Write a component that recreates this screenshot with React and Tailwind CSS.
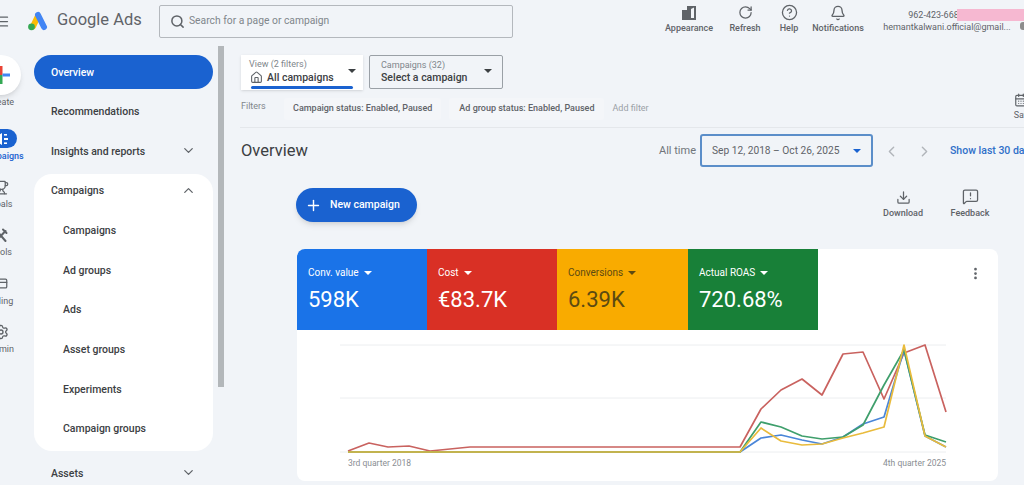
import React from 'react';
import {
  Menu, Search, RotateCw, CircleHelp, Bell, Download, MessageSquareWarning,
  ChevronDown, ChevronUp, ChevronLeft, ChevronRight, Plus, MoreVertical,
  Trophy, CreditCard, Settings, Home, CalendarDays
} from 'lucide-react';

const Caret = ({ className = 'border-t-[#3c4043]' }) => (
  <span className={`block w-0 h-0 border-x-[4px] border-x-transparent border-t-[4px] ${className}`} />
);

// Google Ads mark
const AdsLogo = () => (
  <svg width="21" height="20" viewBox="0 0 21 20" fill="none">
    <path d="M6 15.5 11 5" stroke="#fbbc04" strokeWidth="6" strokeLinecap="round" />
    <path d="M11 4 17 16" stroke="#4285f4" strokeWidth="6" strokeLinecap="round" />
    <circle cx="4.5" cy="15.8" r="3.4" fill="#34a853" />
  </svg>
);

const AppearanceIcon = () => (
  <svg width="16" height="16" viewBox="0 0 16 16" fill="#5f6368">
    <path d="M1 5h5v10H1z" />
    <path fillRule="evenodd" d="M6 1h9v14H6zM10 4v9h3V2.5z" />
  </svg>
);

const ColorPlus = () => (
  <svg width="18" height="18" viewBox="0 0 18 18">
    <rect x="7.5" y="0" width="3" height="9" fill="#ea4335" />
    <rect x="7.5" y="9" width="3" height="9" fill="#34a853" />
    <rect x="0" y="7.5" width="7.5" height="3" fill="#fbbc04" />
    <rect x="10.5" y="7.5" width="7.5" height="3" fill="#4285f4" />
  </svg>
);

const CampaignIcon = () => (
  <svg width="16" height="14" viewBox="0 0 16 14" fill="#fff">
    <path d="M1 4h3l5-3v12L4 10H1z" />
    <rect x="11" y="6" width="4" height="2" />
    <rect x="11" y="2" width="3" height="1.6" />
    <rect x="11" y="10.4" width="3" height="1.6" />
  </svg>
);

const ToolsIcon = () => (
  <svg width="15" height="15" viewBox="0 0 15 15" fill="none" stroke="#5f6368" strokeWidth="2" strokeLinecap="round">
    <path d="M3 2 12.5 13" />
    <path d="M12.5 3 3 13" />
    <path d="M10 1.5 13.5 5" />
  </svg>
);

const topActions = [
  { label: 'Appearance', icon: <AppearanceIcon />, w: 'w-[56px]' },
  { label: 'Refresh', icon: <RotateCw size={15} strokeWidth={2} />, w: 'w-[56px]' },
  { label: 'Help', icon: <CircleHelp size={17} strokeWidth={1.8} />, w: 'w-[32px]' },
  { label: 'Notifications', icon: <Bell size={16} strokeWidth={2} />, w: 'w-[66px]' },
];

const railItems = [
  { label: 'Goals', icon: <Trophy size={15} /> },
  { label: 'Tools', icon: <ToolsIcon /> },
  { label: 'Billing', icon: <CreditCard size={15} /> },
  { label: 'Admin', icon: <Settings size={16} /> },
];

const subItems = ['Campaigns', 'Ad groups', 'Ads', 'Asset groups', 'Experiments', 'Campaign groups'];

const tiles = [
  { label: 'Conv. value', value: '598K', bg: 'bg-[#1a73e8]', text: 'text-white', caret: 'border-t-white', w: 'w-[130px]', round: 'rounded-tl-lg' },
  { label: 'Cost', value: '€83.7K', bg: 'bg-[#d93025]', text: 'text-white', caret: 'border-t-white', w: 'w-[130px]', round: '' },
  { label: 'Conversions', value: '6.39K', bg: 'bg-[#f9ab00]', text: 'text-[#5c4a12]', caret: 'border-t-[#5c4a12]', w: 'w-[131px]', round: '' },
  { label: 'Actual ROAS', value: '720.68%', bg: 'bg-[#188038]', text: 'text-white', caret: 'border-t-white', w: 'w-[130px]', round: '' },
];

const flat = '348,452 740,452';
const series = [
  { color: '#c9625f', points: '348,451 369,443 388,447 409,446 430,451 470,447 740,447 761,409 781,390 802,379 822,395 843,354 863,352 884,399 904,353 925,345 946,412' },
  { color: '#4a86d8', points: `${flat} 761,438 781,435 802,440 822,444 843,437 863,424 884,417 904,350 925,436 946,447` },
  { color: '#3f9f6c', points: `${flat} 761,422 781,427 802,436 822,439 843,437 863,425 884,385 904,350 925,435 946,442` },
  { color: '#e9bb3c', points: `${flat} 761,428 781,441 802,445 822,444 843,438 863,433 884,427 904,345 925,436 946,447` },
];

const TopBar = () => (
  <header className="h-[42px] flex items-center shrink-0 relative">
    <Menu size={15} className="-ml-[5px] text-[#5f6368] shrink-0" />
    <div className="ml-[17px] shrink-0"><AdsLogo /></div>
    <span className="ml-[9px] w-[102px] text-[16.5px] text-[#5f6368] shrink-0 -mt-[1px]">Google Ads</span>
    <div className="w-[354px] h-[33px] border border-[#b4b8bd] rounded-[2px] flex items-center px-[10px] gap-[4px] shrink-0">
      <Search size={15} strokeWidth={2.4} className="text-[#5f6368]" />
      <span className="text-[10.3px] text-[#80868b]">Search for a page or campaign</span>
    </div>
    <div className="ml-[148px] flex items-start shrink-0 mt-[-3px]">
      {topActions.map((a) => (
        <div key={a.label} className={`${a.w} flex flex-col items-center text-[#5f6368]`}>
          <div className="h-[18px] flex items-center">{a.icon}</div>
          <span className="text-[9px] font-medium whitespace-nowrap">{a.label}</span>
        </div>
      ))}
    </div>
    <div className="ml-[12px] w-[128px] shrink-0 flex flex-col items-center text-[9px] text-[#5f6368] leading-[12px]">
      <span className="pr-[27px]">962-423-668</span>
      <span className="whitespace-nowrap">hemantkalwani.official@gmail...</span>
    </div>
    {/* pink redaction over the account number */}
    <div className="absolute left-[957px] top-[9px] w-[67px] h-[12px] bg-[#f6b8d1]" />
    <div className="absolute left-[1020px] top-[22px] w-[6px] h-[8px] bg-[#8d8d8d] rounded-full" />
  </header>
);

const Rail = () => (
  <aside className="w-[48px] -ml-[23px] mr-[9px] shrink-0 pt-[13px] flex flex-col items-center">
    <div className="w-[40px] h-[40px] rounded-full bg-white shadow-md flex items-center justify-center">
      <ColorPlus />
    </div>
    <span className="text-[9px] text-[#5f6368] mt-[1px] leading-[12px] h-[33px]">Create</span>
    <div className="w-[32px] h-[19px] rounded-full bg-[#1a62d0] flex items-center justify-center">
      <CampaignIcon />
    </div>
    <span className="text-[9px] text-[#1a62d0] font-medium mt-[2px] leading-[12px] h-[26px] whitespace-nowrap">Campaigns</span>
    {railItems.map((r) => (
      <div key={r.label} className="h-[48.3px] flex flex-col items-center text-[#5f6368]">
        <div className="h-[22px] flex items-center">{r.icon}</div>
        <span className="text-[9px] leading-[12px]">{r.label}</span>
      </div>
    ))}
  </aside>
);

const NavRow = ({ label, closed, textClass = 'pt-[1px]' }) => (
  <div className="h-[39.6px] flex items-center justify-between pl-[17px] pr-[17px] text-[10.5px] font-medium text-[#3c4043]">
    <span className={textClass}>{label}</span>
    {closed && <ChevronDown size={15} strokeWidth={2} className="text-[#5f6368]" />}
  </div>
);

const SideNav = () => (
  <nav className="w-[179px] shrink-0 pt-[10px]">
    <div className="h-[39.6px] flex items-center">
      <div className="w-full h-[34px] rounded-full bg-[#1a62d0] text-white text-[10.5px] font-medium flex items-center pl-[17px]">
        <span className="pt-[2px]">Overview</span>
      </div>
    </div>
    <NavRow label="Recommendations" />
    <NavRow label="Insights and reports" closed />
    <div className="bg-white rounded-[18px] mt-[3.2px] pb-[2.6px]">
      <div className="h-[33.6px] mb-[3.2px] flex items-center justify-between pl-[17px] pr-[17px] text-[10.5px] font-medium text-[#3c4043]">
        <span>Campaigns</span>
        <ChevronUp size={15} strokeWidth={2} className="text-[#5f6368]" />
      </div>
      {subItems.map((s) => (
        <div key={s} className="h-[39.6px] flex items-center pl-[29px] text-[10.5px] font-medium text-[#3c4043]">
          <span className="pt-[1px]">{s}</span>
        </div>
      ))}
    </div>
    <div className="mt-[2px]"><NavRow label="Assets" closed textClass="pt-[2px]" /></div>
  </nav>
);

const Filters = () => (
  <>
    <div className="flex items-start gap-[6px] ml-[1px]">
      <div className="w-[122px] h-[35px] bg-white shadow-sm relative pl-[8px] pt-[3px] flex justify-between pr-[7px]">
        <div>
          <div className="text-[9px] leading-[13px] text-[#80868b]">View (2 filters)</div>
          <div className="flex items-center gap-[4px] text-[10.5px] leading-[13px] text-[#3c4043] font-medium ml-[1px]">
            <Home size={13} strokeWidth={2} className="text-[#5f6368]" />
            All campaigns
          </div>
        </div>
        <div className="pt-[11px]"><Caret /></div>
        <div className="absolute left-[10px] bottom-[1px] w-[102px] h-[3px] rounded-full bg-[#1a62d0]" />
      </div>
      <div className="w-[134px] h-[34px] border border-[#9aa0a6] rounded-[2px] pl-[11px] pt-[3px] pr-[10px] flex justify-between">
        <div>
          <div className="text-[9px] leading-[12px] text-[#80868b]">Campaigns (32)</div>
          <div className="text-[10.5px] leading-[14px] text-[#3c4043] font-medium">Select a campaign</div>
        </div>
        <div className="pt-[10px]"><Caret /></div>
      </div>
    </div>
    <div className="h-[37px] mt-[1px] flex items-center border-b border-[#e4e7eb] text-[9px] text-[#5f6368]">
      <span className="w-[43px] ml-[1px] text-[#80868b] -mt-[4px] shrink-0">Filters</span>
      <span className="h-[22px] px-[9px] flex items-center bg-[#f4f6f9] rounded-[3px] font-medium shrink-0">Campaign status: Enabled, Paused</span>
      <span className="h-[22px] px-[10px] ml-[8px] flex items-center bg-[#f4f6f9] rounded-[3px] font-medium shrink-0">Ad group status: Enabled, Paused</span>
      <span className="ml-[8px] text-[#9aa0a6] shrink-0">Add filter</span>
      <div className="ml-[365px] -mt-[3px] flex flex-col items-start shrink-0">
        <CalendarDays size={14} />
        <span className="mt-[2px] whitespace-nowrap">Saved</span>
      </div>
    </div>
  </>
);

const OverviewRow = () => (
  <div className="h-[44px] flex items-center mt-[1px]">
    <h1 className="w-[418px] ml-[1px] text-[16.5px] text-[#3c4043] shrink-0">Overview</h1>
    <span className="w-[41px] text-[11px] text-[#70757a] shrink-0">All time</span>
    <div className="w-[173px] h-[33px] shrink-0 border-2 border-[#5b8ec9] rounded-[3px] flex items-center justify-between pl-[10px] pr-[10px] text-[10.2px] text-[#5f6368] mt-[-1px]">
      <span>Sep 12, 2018 – Oct 26, 2025</span>
      <Caret className="border-t-[#1a62d0]" />
    </div>
    <ChevronLeft size={17} className="ml-[10px] text-[#b1b5ba] shrink-0" />
    <ChevronRight size={17} className="ml-[16px] text-[#b1b5ba] shrink-0" />
    <span className="ml-[17px] text-[10.5px] font-medium text-[#2f6fc9] whitespace-nowrap shrink-0">Show last 30 days</span>
  </div>
);

const ActionRow = () => (
  <div className="flex items-start mt-[15px] h-[61px]">
    <button className="ml-[56px] w-[121px] h-[34px] rounded-full bg-[#1a62d0] shadow-md text-white text-[10.5px] font-medium flex items-center pl-[9px] gap-[8px] shrink-0">
      <Plus size={17} strokeWidth={2} />
      New campaign
    </button>
    <div className="ml-[461px] w-[50px] flex flex-col items-center text-[#5f6368] shrink-0 mt-[1px]">
      <Download size={15} strokeWidth={2} className="mt-[1px]" />
      <span className="text-[9px] font-medium mt-[2px]">Download</span>
    </div>
    <div className="ml-[17px] w-[50px] flex flex-col items-center text-[#5f6368] shrink-0">
      <MessageSquareWarning size={17} strokeWidth={1.8} />
      <span className="text-[9px] font-medium mt-[2px]">Feedback</span>
    </div>
  </div>
);

const Chart = () => (
  <svg width="701" height="151" viewBox="297 330 701 151" className="block">
    <line x1="340" y1="345" x2="946" y2="345" stroke="#eceef0" />
    <line x1="340" y1="398" x2="946" y2="398" stroke="#eceef0" />
    <line x1="340" y1="452" x2="946" y2="452" stroke="#eceef0" />
    {series.map((s) => (
      <polyline key={s.color} points={s.points} fill="none" stroke={s.color} strokeWidth="1.7" strokeLinejoin="round" />
    ))}
    <text x="348" y="466" fontSize="8.5" fill="#8a8e93">3rd quarter 2018</text>
    <text x="946" y="466" fontSize="8.5" fill="#8a8e93" textAnchor="end">4th quarter 2025</text>
  </svg>
);

const ChartCard = () => (
  <div className="ml-[57px] w-[701px] h-[232px] bg-white rounded-lg">
    <div className="flex h-[81px] relative">
      {tiles.map((t) => (
        <div key={t.label} className={`${t.w} ${t.bg} ${t.text} ${t.round} pl-[11px] pt-[18px]`}>
          <div className="flex items-center gap-[5px] text-[10px] leading-[12px]">
            {t.label}
            <Caret className={t.caret} />
          </div>
          <div className="text-[22px] leading-[26px] mt-[8px]">{t.value}</div>
        </div>
      ))}
      <MoreVertical size={15} strokeWidth={2.4} className="absolute left-[671px] top-[17px] text-[#5f6368]" />
    </div>
    <Chart />
  </div>
);

export default function App() {
  return (
    <div className="w-[1024px] h-[485px] overflow-hidden bg-[#f1f4f8] flex flex-col font-['Roboto',sans-serif]">
      <TopBar />
      <div className="flex flex-1 min-h-0">
        <Rail />
        <SideNav />
        <div className="w-[6px] h-[341px] mt-[4px] ml-[5px] bg-[#b3b7ba] shrink-0" />
        <main className="ml-[16px] w-[784px] shrink-0 pt-[13px]">
          <Filters />
          <OverviewRow />
          <ActionRow />
          <ChartCard />
        </main>
      </div>
    </div>
  );
}
